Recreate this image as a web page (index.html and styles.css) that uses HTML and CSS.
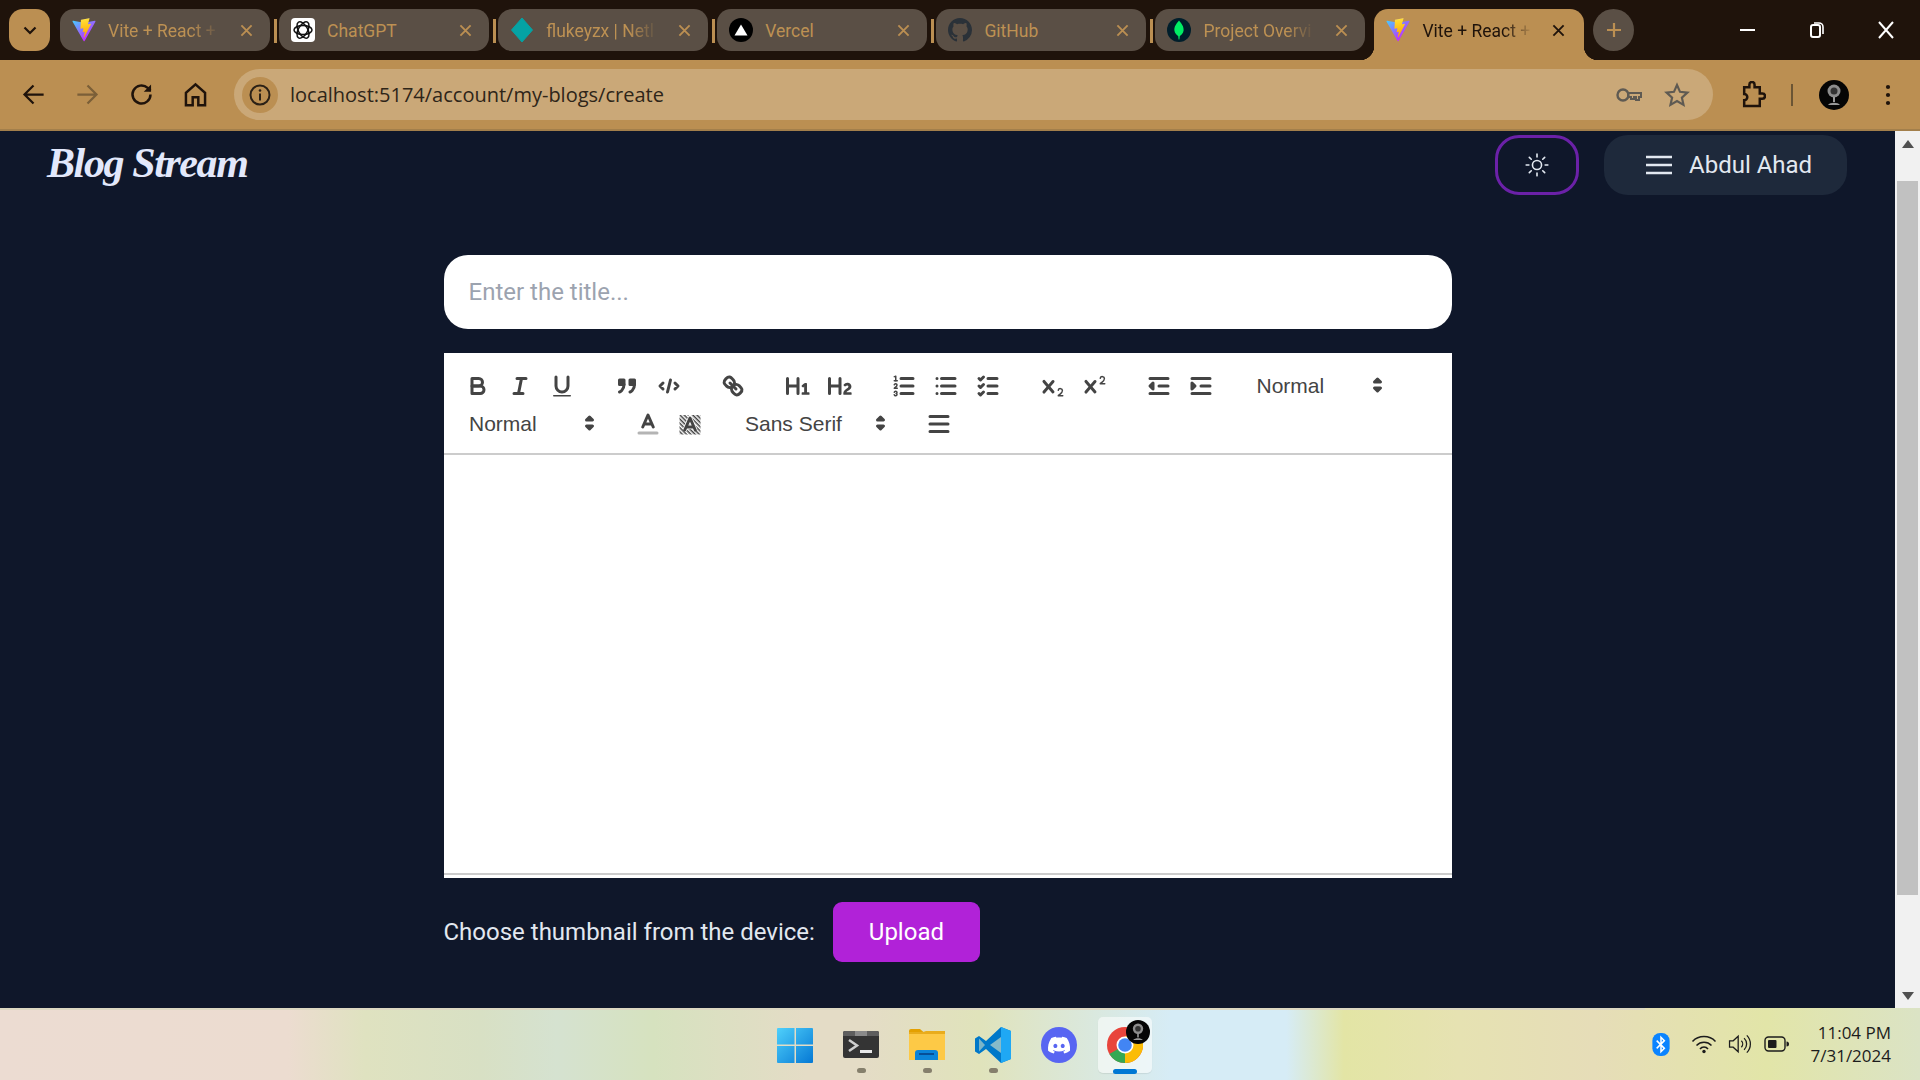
FILE: index.html
```html
<!DOCTYPE html>
<html lang="en">
<head>
<meta charset="utf-8">
<title>Vite + React</title>
<link rel="stylesheet" href="styles.css">
</head>
<body>
<svg class="defs" width="0" height="0" aria-hidden="true">
  <defs>
    <linearGradient id="vb" x1="6" y1="33" x2="235" y2="344" gradientUnits="userSpaceOnUse"><stop offset="0" stop-color="#41D1FF"/><stop offset="1" stop-color="#BD34FE"/></linearGradient>
    <linearGradient id="vy" x1="194" y1="8" x2="236" y2="292" gradientUnits="userSpaceOnUse"><stop offset="0" stop-color="#FFEA83"/><stop offset=".08" stop-color="#FFDD35"/><stop offset="1" stop-color="#FFA800"/></linearGradient>
    <symbol id="vite" viewBox="0 0 410 404">
      <path fill="url(#vb)" d="M399.641 59.5246L215.643 388.545C211.844 395.338 202.084 395.378 198.228 388.618L10.5817 59.5563C6.38087 52.1896 12.6802 43.2665 21.0281 44.7586L205.223 77.6824C206.398 77.8924 207.601 77.8904 208.776 77.6763L389.119 44.8058C397.439 43.2894 403.768 52.1434 399.641 59.5246Z"/>
      <path fill="url(#vy)" d="M292.965 1.5744L156.801 28.2552C154.563 28.6937 152.906 30.5903 152.771 32.8664L144.395 174.33C144.198 177.662 147.258 180.248 150.51 179.498L188.42 170.749C191.967 169.931 195.172 173.055 194.443 176.622L183.18 231.775C182.422 235.487 185.907 238.661 189.532 237.56L212.947 230.446C216.577 229.344 220.065 232.527 219.297 236.242L201.398 322.875C200.278 328.294 207.486 331.249 210.492 326.603L212.5 323.5L323.454 102.072C325.312 98.3645 322.108 94.137 318.036 94.9228L279.014 102.454C275.347 103.161 272.227 99.746 273.262 96.1583L298.731 7.86689C299.767 4.27314 296.636 0.855181 292.965 1.5744Z"/>
    </symbol>
    <symbol id="x" viewBox="0 0 14 14"><path d="M1.500 1.500l11 11M12.500 1.500l-11 11" fill="none" stroke="currentColor" stroke-width="2"/></symbol>
    <symbol id="av" viewBox="0 0 30 30">
      <circle cx="15" cy="15" r="15" fill="#050505"/>
      <circle cx="15" cy="11" r="6.500" fill="#8d8d8d"/><circle cx="15" cy="11" r="3.500" fill="#333"/>
      <path d="M14 17h2v5h-2zM9 25c2-3 10-3 12 0z" fill="#999"/>
    </symbol>
    <pattern id="hatch" width="2" height="2" patternUnits="userSpaceOnUse" patternTransform="rotate(45)"><rect width="2" height="1" fill="#444"/></pattern>
  </defs>
</svg>
<div class="window">
  <div class="tabbar">
    <button class="tab-search"><svg width="14" height="9" viewBox="0 0 14 9"><path d="M1.500 1.500L7 7l5.500-5.500" fill="none" stroke="#1f130b" stroke-width="2.200"/></svg></button>
    <div class="tab">
      <svg class="fav" viewBox="0 0 26 26"><use href="#vite"/></svg>
      <span class="tab-title">Vite + React +</span>
      <svg class="tab-x"><use href="#x"/></svg>
    </div>
    <i class="tab-sep"></i>
    <div class="tab">
      <svg class="fav" viewBox="0 0 24 24"><rect width="24" height="24" rx="4" fill="#fff"/><g fill="none" stroke="#111" stroke-width="1.500"><ellipse cx="12" cy="12" rx="9" ry="4.600"/><ellipse cx="12" cy="12" rx="9" ry="4.600" transform="rotate(60 12 12)"/><ellipse cx="12" cy="12" rx="9" ry="4.600" transform="rotate(120 12 12)"/></g></svg>
      <span class="tab-title plain">ChatGPT</span>
      <svg class="tab-x"><use href="#x"/></svg>
    </div>
    <i class="tab-sep"></i>
    <div class="tab">
      <svg class="fav" viewBox="0 0 24 24"><path d="M12 0l10.500 12L12 24 1.500 12z" fill="#05a3a4" stroke="#05a3a4" stroke-linejoin="round" stroke-width="1"/></svg>
      <span class="tab-title">flukeyzx | Netl</span>
      <svg class="tab-x"><use href="#x"/></svg>
    </div>
    <i class="tab-sep"></i>
    <div class="tab">
      <svg class="fav" viewBox="0 0 24 24"><circle cx="12" cy="12" r="12"/><path d="M12 6.500l6.500 11h-13z" fill="#fff"/></svg>
      <span class="tab-title plain">Vercel</span>
      <svg class="tab-x"><use href="#x"/></svg>
    </div>
    <i class="tab-sep"></i>
    <div class="tab">
      <svg class="fav" viewBox="0 0 16 16"><path fill="#2a3138" d="M8 0C3.58 0 0 3.58 0 8c0 3.54 2.29 6.53 5.47 7.59.4.07.55-.17.55-.38 0-.19-.01-.82-.01-1.49-2.01.37-2.53-.49-2.69-.94-.09-.23-.48-.94-.82-1.13-.28-.15-.68-.52-.01-.53.63-.01 1.08.58 1.23.82.72 1.21 1.87.87 2.33.66.07-.52.28-.87.51-1.07-1.78-.2-3.64-.89-3.64-3.95 0-.87.31-1.59.82-2.15-.08-.2-.36-1.02.08-2.12 0 0 .67-.21 2.2.82.64-.18 1.32-.27 2-.27.68 0 1.36.09 2 .27 1.53-1.04 2.2-.82 2.2-.82.44 1.1.16 1.92.08 2.12.51.56.82 1.27.82 2.15 0 3.07-1.87 3.75-3.65 3.95.29.25.54.73.54 1.48 0 1.07-.01 1.93-.01 2.2 0 .21.15.46.55.38A8.013 8.013 0 0016 8c0-4.42-3.58-8-8-8z"/></svg>
      <span class="tab-title plain">GitHub</span>
      <svg class="tab-x"><use href="#x"/></svg>
    </div>
    <i class="tab-sep"></i>
    <div class="tab">
      <svg class="fav" viewBox="0 0 24 24"><circle cx="12" cy="12" r="12" fill="#001e2b"/><path d="M12 2.500c2.500 3 5 6 4.600 10-.3 3-2.600 4.600-3.800 5.500L12.400 21.500h-.8l-.4-3.500C10 17 7.700 15.500 7.400 12.500 7 8.500 9.500 5.500 12 2.500z" fill="#00ed64"/></svg>
      <span class="tab-title">Project Overvi</span>
      <svg class="tab-x"><use href="#x"/></svg>
    </div>
    <div class="tab tab-active">
      <svg class="fav" viewBox="0 0 26 26"><use href="#vite"/></svg>
      <span class="tab-title">Vite + React +</span>
      <svg class="tab-x"><use href="#x"/></svg>
    </div>
    <button class="tab-new"><svg width="18" height="18" viewBox="0 0 18 18"><path d="M9 2v14M2 9h14" stroke="#bb8f52" stroke-width="2.200"/></svg></button>
    <div class="win-controls">
      <svg width="16" height="16" viewBox="0 0 16 16"><path d="M0 8h15" stroke="#fff" stroke-width="2"/></svg>
      <svg width="16" height="18" viewBox="0 0 16 18"><rect x="2" y="4" width="9" height="12" rx="2" fill="none" stroke="#fff" stroke-width="2"/><path d="M5 2h5a4 4 0 0 1 4 4v7" fill="none" stroke="#fff" stroke-width="1.600"/></svg>
      <svg width="16" height="18" viewBox="0 0 16 18"><path d="M1 1l14 16M15 1L1 17" stroke="#fff" stroke-width="2"/></svg>
    </div>
  </div>

  <div class="toolbar">
    <div class="nav-icons">
      <svg class="nav-i" viewBox="0 0 24 24"><path d="M21 12H4M12 4l-8 8 8 8" fill="none" stroke="#1f130b" stroke-width="2"/></svg>
      <svg class="nav-i" viewBox="0 0 24 24"><path d="M3 12h17M12 4l8 8-8 8" fill="none" stroke="#7b5f38" stroke-width="2"/></svg>
      <svg class="nav-i" viewBox="0 0 24 24"><path d="M20 12a8 8 0 1 1-2.500-5.800L20 8.500" fill="none" stroke="#1f130b" stroke-width="2.200"/><path d="M20.500 3v6.500H14z" fill="#1f130b"/></svg>
      <svg class="nav-i" viewBox="0 0 24 24"><path d="M3.500 21.500V10.500L12 3l8.500 7.500v11H14.500v-7h-5v7z" fill="none" stroke="#1f130b" stroke-width="2.200"/></svg>
    </div>
    <div class="omnibox">
      <span class="chip"><svg width="24" height="24" viewBox="0 0 24 24"><circle cx="12" cy="12" r="9.500" fill="none" stroke="#2b2116" stroke-width="2"/><path d="M12 10.500v7" stroke="#2b2116" stroke-width="2"/><circle cx="12" cy="7.500" r="1.300" fill="#2b2116"/></svg></span>
      <span class="url">localhost:5174/account/my-blogs/create</span>
      <svg class="omni-i" viewBox="0 0 28 24"><circle cx="8" cy="12" r="5.500" fill="none" stroke="#5f5a52" stroke-width="2.400"/><path d="M13 10h13v4h-2v3h-3v-3h-2v2h-3v-2h-3z" fill="none" stroke="#5f5a52" stroke-width="2"/></svg>
      <svg class="omni-i star" viewBox="0 0 24 24"><path d="M12 2.800l2.800 6.300 6.800.7-5.100 4.600 1.500 6.700L12 17.500l-6 3.600 1.500-6.700-5.100-4.600 6.800-.7z" fill="none" stroke="#5f5a52" stroke-width="2"/></svg>
    </div>
    <svg class="ext" viewBox="0 0 26 26"><path d="M5 6h5V3.500a2.500 2.500 0 0 1 5 0V6h5v6h2.500a2.500 2.500 0 0 1 0 5H20v7H5v-5.500a3 3 0 0 0 0-6z" fill="none" stroke="#1f130b" stroke-width="2.400"/></svg>
    <i class="tool-sep"></i>
    <svg class="avatar"><use href="#av"/></svg>
    <svg class="dots" viewBox="0 0 6 24"><circle cx="3" cy="4" r="2.100"/><circle cx="3" cy="12" r="2.100"/><circle cx="3" cy="20" r="2.100"/></svg>
  </div>

  <div class="viewport">
    <main class="page">
      <header class="app-header">
        <a class="logo">Blog Stream</a>
        <div class="header-actions">
          <button class="theme-btn"><svg width="26" height="26" viewBox="0 0 24 24" fill="none" stroke="#e2e8f0" stroke-width="1.500" stroke-linecap="round"><circle cx="12" cy="12" r="4.200"/><path d="M12 2v2.500M12 19.500V22M2 12h2.500M19.500 12H22M4.900 4.900l1.800 1.800M17.300 17.300l1.800 1.800M4.900 19.100l1.800-1.800M17.300 6.700l1.800-1.800"/></svg></button>
          <button class="user-btn"><svg width="30" height="24" viewBox="0 0 30 24"><path d="M2 4h26M2 12h26M2 20h26" stroke="#e2e8f0" stroke-width="2.400"/></svg><span>Abdul Ahad</span></button>
        </div>
      </header>
      <section class="form">
        <input class="title-input" type="text" placeholder="Enter the title...">
        <div class="editor">
          <div class="ql-toolbar">
            <div class="ql-row">
              <span class="ql-group">
                <svg class="ql" viewBox="0 0 18 18"><path class="s" d="M5,4H9.5A2.5,2.5,0,0,1,12,6.5v0A2.5,2.5,0,0,1,9.5,9H5A0,0,0,0,1,5,9V4A0,0,0,0,1,5,4Z"/><path class="s" d="M5,9h5.5A2.5,2.5,0,0,1,13,11.5v0A2.5,2.5,0,0,1,10.5,14H5a0,0,0,0,1,0,0V9A0,0,0,0,1,5,9Z"/></svg>
                <svg class="ql" viewBox="0 0 18 18"><path class="s" d="M7 4h6M5 14h6M8 14l2-10"/></svg>
                <svg class="ql" viewBox="0 0 18 18"><path class="s" d="M5,3V9a4.012,4.012,0,0,0,4,4H9a4.012,4.012,0,0,0,4-4V3"/><rect class="f" height="1" rx=".5" ry=".5" width="12" x="3" y="15"/></svg>
              </span>
              <span class="ql-group">
                <svg class="ql" viewBox="0 0 18 18"><rect class="s f" height="3" width="3" x="4" y="5"/><rect class="s f" height="3" width="3" x="11" y="5"/><path class="s" d="M7,8c0,4.031-3,5-3,5"/><path class="s" d="M14,8c0,4.031-3,5-3,5"/></svg>
                <svg class="ql" viewBox="0 0 18 18"><path class="s" d="M5 7L3 9l2 2M13 7l2 2-2 2M10 5L8 13"/></svg>
              </span>
              <span class="ql-group">
                <svg class="ql" viewBox="0 0 18 18"><path class="s" d="M7 7l4 4"/><path class="s" d="M8.9,4.577a3.476,3.476,0,0,1,.36,4.679A3.476,3.476,0,0,1,4.577,8.9C3.185,7.5,2.035,6.4,4.217,4.217S7.5,3.185,8.9,4.577Z"/><path class="s" d="M13.423,9.1a3.476,3.476,0,0,0-4.679-.36,3.476,3.476,0,0,0,.36,4.679c1.392,1.392,2.5,2.542,4.679.36S14.815,10.5,13.423,9.1Z"/></svg>
              </span>
              <span class="ql-group">
                <svg class="ql" viewBox="0 0 18 18"><path class="f" d="M10,4V14a1,1,0,0,1-2,0V10H3v4a1,1,0,0,1-2,0V4A1,1,0,0,1,3,4V8H8V4a1,1,0,0,1,2,0Zm6.06787,9.209H14.98975V7.59863a.54085.54085,0,0,0-.605-.60547h-.62744a1.01119,1.01119,0,0,0-.748.29688L11.645,8.56641a.5435.5435,0,0,0-.022.8584l.28613.30762a.53861.53861,0,0,0,.84717.0332l.09912-.08789a1.2137,1.2137,0,0,0,.2417-.35254h.02246s-.01123.30859-.01123.60547V13.209H12.041a.54085.54085,0,0,0-.605.60547v.43945a.54085.54085,0,0,0,.605.60547h4.02686a.54085.54085,0,0,0,.605-.60547v-.43945A.54085.54085,0,0,0,16.06787,13.209Z"/></svg>
                <svg class="ql" viewBox="0 0 18 18"><path class="f" d="M16.73975,13.81445v.43945a.54085.54085,0,0,1-.605.60547H11.855a.58392.58392,0,0,1-.64893-.60547V14.0127c0-2.90527,3.39941-3.42187,3.39941-4.55469a.77675.77675,0,0,0-.84717-.78125,1.17684,1.17684,0,0,0-.83594.38477c-.2749.26367-.561.374-.85791.13184l-.4292-.34082c-.30811-.24219-.38525-.51758-.1543-.81445a2.97155,2.97155,0,0,1,2.45361-1.17676,2.45393,2.45393,0,0,1,2.68408,2.40918c0,2.45312-3.1792,2.92676-3.27832,3.93848h2.79443A.54085.54085,0,0,1,16.73975,13.81445ZM9,3A.99974.99974,0,0,0,8,4V8H3V4A1,1,0,0,0,1,4V14a1,1,0,0,0,2,0V10H8v4a1,1,0,0,0,2,0V4A.99974.99974,0,0,0,9,3Z"/></svg>
              </span>
              <span class="ql-group">
                <svg class="ql" viewBox="0 0 18 18"><path class="s" d="M7 4h8M7 9h8M7 14h8"/><path class="t" d="M2.500 5.500h2"/><path class="f" d="M3.500,6A0.5,0.5,0,0,1,3,5.500V3.085l-0.276.138A0.5,0.5,0,0,1,2.053,3c-0.124-.247-0.023-0.324.224-0.447l1-.5A0.5,0.5,0,0,1,4,2.500v3A0.5,0.5,0,0,1,3.500,6Z"/><path class="t" d="M4.500,10.500h-2c0-.234,1.850-1.076,1.850-2.234A0.959,0.959,0,0,0,2.500,8.156"/><path class="t" d="M2.500,14.846a0.959,0.959,0,0,0,1.850-.109A0.700,0.700,0,0,0,3.750,14a0.688,0.688,0,0,0,.6-0.736,0.959,0.959,0,0,0-1.850-.109"/></svg>
                <svg class="ql" viewBox="0 0 18 18"><path class="s" d="M6 4h9M6 9h9M6 14h9M3 4h0M3 9h0M3 14h0"/></svg>
                <svg class="ql" viewBox="0 0 18 18"><path class="s" d="M9 4h6M9 9h6M9 14h6M3 4l1 1 2-2M3 9l1 1 2-2M3 14l1 1 2-2"/></svg>
              </span>
              <span class="ql-group">
                <svg class="ql" viewBox="0 0 18 18"><path class="f" d="M15.500,15H13.861a3.858,3.858,0,0,0,1.914-2.975,1.800,1.800,0,0,0-1.600-1.751A1.921,1.921,0,0,0,12.021,11.700a0.50013,0.50013,0,1,0,.957.291h0a0.914,0.914,0,0,1,1.053-.725,0.810,0.810,0,0,1,.744.762c0,1.076-1.16971,1.86982-1.93971,2.43082A1.45639,1.45639,0,0,0,12,15.500a0.500,0.500,0,0,0,.5.500h3A0.500,0.500,0,0,0,15.500,15Z"/><path class="f" d="M9.651,5.241a1,1,0,0,0-1.410.108L6,7.964,3.759,5.349a1,1,0,1,0-1.519,1.300L4.683,9.500,2.241,12.350a1,1,0,1,0,1.519,1.300L6,11.036l2.241,2.616a1,1,0,0,0,1.519-1.300L7.317,9.500,9.759,6.651A1,1,0,0,0,9.651,5.241Z"/></svg>
                <svg class="ql" viewBox="0 0 18 18"><path class="f" d="M15.500,7H13.861a4.015,4.015,0,0,0,1.914-2.975,1.800,1.800,0,0,0-1.600-1.751A1.922,1.922,0,0,0,12.021,3.700a0.500,0.500,0,1,0,.957.291,0.917,0.917,0,0,1,1.053-.725,0.810,0.810,0,0,1,.744.762c0,1.077-1.164,1.925-1.934,2.486A1.423,1.423,0,0,0,12,7.500a0.500,0.500,0,0,0,.5.500h3A0.500,0.500,0,0,0,15.500,7Z"/><path class="f" d="M9.651,5.241a1,1,0,0,0-1.410.108L6,7.964,3.759,5.349a1,1,0,1,0-1.519,1.300L4.683,9.500,2.241,12.350a1,1,0,1,0,1.519,1.300L6,11.036l2.241,2.616a1,1,0,0,0,1.519-1.300L7.317,9.500,9.759,6.651A1,1,0,0,0,9.651,5.241Z"/></svg>
              </span>
              <span class="ql-group">
                <svg class="ql" viewBox="0 0 18 18"><path class="s" d="M3 14h12M3 4h12M9 9h6"/><polygon class="s" points="5 7 5 11 3 9 5 7"/></svg>
                <svg class="ql" viewBox="0 0 18 18"><path class="s" d="M3 14h12M3 4h12M9 9h6"/><polygon class="s f" points="3 7 3 11 5 9 3 7"/></svg>
              </span>
              <span class="ql-picker w-size">Normal<svg class="caret" viewBox="0 0 18 18"><polygon class="s f" points="7 10 9 12 11 10 7 10"/><polygon class="s f" points="7 6 9 4 11 6 7 6"/></svg></span>
            </div>
            <div class="ql-row">
              <span class="ql-picker w-size">Normal<svg class="caret" viewBox="0 0 18 18"><polygon class="s f" points="7 10 9 12 11 10 7 10"/><polygon class="s f" points="7 6 9 4 11 6 7 6"/></svg></span>
              <span class="ql-group">
                <svg class="ql" viewBox="0 0 18 18"><path class="s lbl" d="M3 15h12"/><path class="s" d="M5.500 11L9 3l3.500 8M11.630 9H6.380"/></svg>
                <svg class="ql" viewBox="0 0 18 18"><rect x="2" y="3" width="14" height="13" fill="url(#hatch)"/><path d="M5.500 13L9 5l3.500 8M11.630 11H6.380" fill="none" stroke="#fff" stroke-width="3"/><path class="s" d="M5.500 13L9 5l3.500 8M11.630 11H6.380"/></svg>
              </span>
              <span class="ql-picker w-font">Sans Serif<svg class="caret" viewBox="0 0 18 18"><polygon class="s f" points="7 10 9 12 11 10 7 10"/><polygon class="s f" points="7 6 9 4 11 6 7 6"/></svg></span>
              <span class="ql-group">
                <svg class="ql" viewBox="0 0 18 18"><path class="s" d="M3 4h12M3 9h12M3 14h12"/></svg>
              </span>
            </div>
          </div>
          <div class="ql-body"></div>
        </div>
        <div class="upload-row">
          <span class="upload-label">Choose thumbnail from the device:</span>
          <button class="upload-btn">Upload</button>
        </div>
      </section>
    </main>
    <div class="scrollbar">
      <span class="sb-arrow"><svg width="12" height="8" viewBox="0 0 12 8"><path d="M6 0l6 8H0z" fill="#505050"/></svg></span>
      <span class="sb-thumb"></span>
      <span class="sb-rest"></span>
      <span class="sb-arrow"><svg width="12" height="8" viewBox="0 0 12 8"><path d="M0 0h12L6 8z" fill="#505050"/></svg></span>
    </div>
  </div>

  <footer class="taskbar">
    <div class="tb-spacer"></div>
    <div class="tb-apps">
      <div class="tb-app">
        <svg class="tb-i" viewBox="0 0 36 36"><defs><linearGradient id="w" x1="0" y1="0" x2="1" y2="1"><stop offset="0" stop-color="#4fd0fb"/><stop offset="1" stop-color="#0578d4"/></linearGradient></defs><path fill="url(#w)" d="M1 1h16.500v16.500H0V2a1 1 0 0 1 1-1zM19 1h16a1 1 0 0 1 1 1v15.500H19zM0 19h17.500v17H1a1 1 0 0 1-1-1zM19 19h17v16a1 1 0 0 1-1 1H19z"/></svg>
      </div>
      <div class="tb-app running">
        <svg class="tb-i" viewBox="0 0 36 36"><rect x="0" y="4" width="36" height="27" rx="2" fill="#343434"/><path d="M0 6a2 2 0 0 1 2-2h10v5H0z" fill="#5e5e5e"/><rect x="12" y="4" width="12" height="5" fill="#8a8a8a"/><path d="M24 4h10a2 2 0 0 1 2 2v3H24z" fill="#5e5e5e"/><path d="M6 13l8 5.500-8 5.500" fill="none" stroke="#cfcfcf" stroke-width="2.500"/><rect x="17" y="23" width="12" height="3" fill="#e8e8e8"/></svg>
      </div>
      <div class="tb-app running">
        <svg class="tb-i" viewBox="0 0 36 36"><path d="M0 4a2 2 0 0 1 2-2h9l4 3.500h-15z" fill="#e4a000"/><path d="M0 5h36v28H0z" fill="#fdc946"/><path d="M0 5h14l3-1h19v3H0z" fill="#e9ac1c"/><path d="M6 33v-7a3 3 0 0 1 3-3h17a3 3 0 0 1 3 3v7z" fill="#0b84d8"/><rect x="10" y="26" width="15" height="2" fill="#064f97"/></svg>
      </div>
      <div class="tb-app running">
        <svg class="tb-i" viewBox="0 0 36 36"><path d="M26 0L11 14 4 9 0 11.500v13L4 27l7-5L26 36l10-4V4z" fill="#0078c9"/><path d="M26 0l10 4v28l-10 4z" fill="#1fa8f4"/><path d="M26 10L15 18l11 8z" fill="#f4f0c8" opacity=".55"/><path d="M4 11.500v13l6-6.500z" fill="#f4f0c8" opacity=".5"/></svg>
      </div>
      <div class="tb-app">
        <svg class="tb-i" viewBox="0 0 36 36"><circle cx="18" cy="18" r="18" fill="#5865f2"/><g transform="translate(7 7) scale(.92)"><path fill="#fff" d="M20.317 4.3698a19.7913 19.7913 0 00-4.8851-1.5152.0741.0741 0 00-.0785.0371c-.211.3753-.4447.8648-.6083 1.2495-1.8447-.2762-3.68-.2762-5.4868 0-.1636-.3933-.4058-.8742-.6177-1.2495a.077.077 0 00-.0785-.037 19.7363 19.7363 0 00-4.8852 1.515.0699.0699 0 00-.0321.0277C.5334 9.0458-.319 13.5799.0992 18.0578a.0824.0824 0 00.0312.0561c2.0528 1.5076 4.0413 2.4228 5.9929 3.0294a.0777.0777 0 00.0842-.0276c.4616-.6304.8731-1.2952 1.226-1.9942a.076.076 0 00-.0416-.1057c-.6528-.2476-1.2743-.5495-1.8722-.8923a.077.077 0 01-.0076-.1277c.1258-.0943.2517-.1923.3718-.2914a.0743.0743 0 01.0776-.0105c3.9278 1.7933 8.18 1.7933 12.0614 0a.0739.0739 0 01.0785.0095c.1202.099.246.1981.3728.2924a.077.077 0 01-.0066.1276 12.2986 12.2986 0 01-1.873.8914.0766.0766 0 00-.0407.1067c.3604.698.7719 1.3628 1.225 1.9932a.076.076 0 00.0842.0286c1.961-.6067 3.9495-1.5219 6.0023-3.0294a.077.077 0 00.0313-.0552c.5004-5.177-.8382-9.6739-3.5485-13.6604a.061.061 0 00-.0312-.0286zM8.02 15.3312c-1.1825 0-2.1569-1.0857-2.1569-2.419 0-1.3332.9555-2.4189 2.157-2.4189 1.2108 0 2.1757 1.0952 2.1568 2.419 0 1.3332-.9555 2.4189-2.1569 2.4189zm7.9748 0c-1.1825 0-2.1569-1.0857-2.1569-2.419 0-1.3332.9554-2.4189 2.1569-2.4189 1.2108 0 2.1757 1.0952 2.1568 2.419 0 1.3332-.946 2.4189-2.1568 2.4189Z"/></g></svg>
      </div>
      <div class="tb-app active">
        <svg class="tb-i" viewBox="0 0 36 36"><circle cx="18" cy="18" r="18" fill="#e8453c"/><path d="M18 18L2.400 27A18 18 0 0 0 18 36c1 0 2-.1 3-.3z" fill="#34a853"/><path d="M18 9h15.600A18 18 0 0 1 18 36z" fill="#fbbc05"/><circle cx="18" cy="18" r="8.500" fill="#fff"/><circle cx="18" cy="18" r="6.800" fill="#4285f4"/></svg>
        <svg class="tb-badge"><use href="#av"/></svg>
      </div>
    </div>
    <div class="tb-tray">
      <svg class="bt" viewBox="0 0 18 24"><rect width="18" height="24" rx="8" fill="#0a84ff"/><path d="M4.500 8l8 8-3.500 3.500v-15L12.500 8l-8 8" fill="none" stroke="#fff" stroke-width="1.600"/></svg>
      <svg class="tray-i" viewBox="0 0 26 20"><path d="M1.500 7.500a16 16 0 0 1 23 0M5.500 11.500a10.500 10.500 0 0 1 15 0M9 15a5 5 0 0 1 8 0" fill="none" stroke="#1c1c1c" stroke-width="1.500"/><circle cx="13" cy="17.500" r="1.700" fill="#1c1c1c"/></svg>
      <svg class="tray-i" viewBox="0 0 26 22"><path d="M1.500 7.500h4L11 2.500v17l-5.500-5h-4z" fill="none" stroke="#1c1c1c" stroke-width="1.400"/><path d="M14.500 7.500a5 5 0 0 1 0 7M17.500 4.500a9 9 0 0 1 0 13M20.500 1.500a13.500 13.500 0 0 1 0 19" fill="none" stroke="#1c1c1c" stroke-width="1.400"/></svg>
      <svg class="tray-i" viewBox="0 0 26 20"><rect x="1" y="3" width="20" height="14" rx="3.500" fill="none" stroke="#1c1c1c" stroke-width="1.400"/><rect x="4" y="6" width="8.500" height="8" rx="1" fill="#1c1c1c"/><path d="M22.500 7.500a2.500 2.500 0 0 1 0 5z" fill="#1c1c1c"/></svg>
      <div class="clock"><span>11:04 PM</span><span>7/31/2024</span></div>
    </div>
  </footer>
</div>
</body>
</html>
```

FILE: styles.css
```css
* { box-sizing: border-box; }
html, body { margin: 0; padding: 0; height: 100%; overflow: hidden; }
button { border: 0; padding: 0; font: inherit; }
.defs { display: block; height: 0; position: absolute; }
.window { display: flex; flex-direction: column; width: 1920px; height: 1080px; }

/* Tab strip */
.tabbar { display: flex; align-items: flex-start; height: 60px; padding: 9px 0 0 9px; background: #1f130b; color: #bb8f52; flex: none; }
.tab-search { display: flex; align-items: center; justify-content: center; width: 41px; height: 42px; margin-right: 10px; background: #bb8f52; border-radius: 14px; }
.tab { position: relative; display: flex; align-items: center; flex: none; width: 210px; height: 42px; padding: 0 12px; background: #5a4f45; border-radius: 14px; }
.tab-sep { flex: none; width: 3px; height: 24px; margin: 10px 2.100px 0 4px; background: #bb8f52; }
.fav { flex: none; width: 24px; height: 24px; margin-right: 12px; }
.tab-title { flex: 1; min-width: 0; padding-top: 1px; overflow: hidden; white-space: nowrap; font: 17.500px "Roboto", sans-serif; color: #bd9153; -webkit-mask-image: linear-gradient(90deg, #000 68%, transparent 92%); mask-image: linear-gradient(90deg, #000 68%, transparent 92%); }
.tab-title.plain { -webkit-mask-image: none; mask-image: none; }
.tab-x { flex: none; width: 13px; height: 13px; margin-left: 10px; margin-right: 5px; color: #bb8f52; }
.tab-active { margin-left: 9px; height: 51px; background: #bb8f52; border-radius: 14px 14px 0 0; padding-bottom: 9px; }
.tab-active::before, .tab-active::after { content: ""; position: absolute; bottom: 0; width: 14px; height: 14px; }
.tab-active::before { left: -14px; background: radial-gradient(circle at 0 0, transparent 14px, #bb8f52 14.500px); }
.tab-active::after { right: -14px; background: radial-gradient(circle at 100% 0, transparent 14px, #bb8f52 14.500px); }
.tab-active .tab-title { color: #1f130b; }
.tab-active .tab-x { color: #1f130b; margin-right: 7px; }
.tab-new { display: flex; align-items: center; justify-content: center; flex: none; width: 41px; height: 42px; margin-left: 9px; background: #5a4f45; border-radius: 50%; position: relative; z-index: 1; }
.win-controls { display: flex; align-items: center; justify-content: space-between; height: 42px; margin-left: auto; width: 154px; margin-right: 26px; }

/* Browser toolbar */
.toolbar { display: flex; align-items: center; flex: none; height: 71px; background: #bb8f52; border-bottom: 2px solid #a37f4b; }
.nav-icons { display: flex; align-items: center; gap: 27px; width: 234px; padding-left: 20px; flex: none; }
.nav-i { width: 27px; height: 27px; flex: none; }
.omnibox { display: flex; align-items: center; flex: none; width: 1479px; height: 51px; padding: 0 23px 0 8px; background: #caa878; border-radius: 26px; }
.chip { display: flex; align-items: center; justify-content: center; width: 36px; height: 36px; margin-right: 12px; background: #bb8f52; border-radius: 50%; flex: none; }
.url { flex: 1; font: 20px "Open Sans", sans-serif; color: #2e2518; white-space: nowrap; }
.omni-i { flex: none; width: 28px; height: 24px; margin-right: 21px; }
.omni-i.star { width: 26px; height: 26px; margin-right: 0; }
.ext { width: 27px; height: 27px; margin-left: 26px; flex: none; }
.tool-sep { width: 2px; height: 22px; margin-left: 25px; background: #6b5534; flex: none; }
.avatar { width: 30px; height: 30px; margin-left: 26px; flex: none; }
.dots { width: 6px; height: 24px; margin-left: 36px; fill: #1f130b; flex: none; }

/* Page */
.viewport { display: flex; flex: 1; min-height: 0; background: #0f172a; }
.page { flex: 1; min-width: 0; padding-top: 4px; }
.app-header { display: flex; align-items: center; justify-content: space-between; height: 60px; padding: 0 48px 0 47px; }
.logo { display: block; font: italic 700 42px/60px "Liberation Serif", serif; letter-spacing: -1.400px; color: #e2e8fb; white-space: nowrap; margin-top: -4px; }
.header-actions { display: flex; align-items: center; gap: 25px; }
.theme-btn { display: flex; align-items: center; justify-content: center; width: 84px; height: 60px; background: transparent; border: 3px solid #6b21a8; border-radius: 24px; }
.user-btn { display: flex; align-items: center; gap: 15px; height: 60px; width: 243px; padding-left: 40px; background: #1e293b; border-radius: 24px; color: #e2e8f0; font: 400 24px "Roboto", sans-serif; }
.form { display: flex; flex-direction: column; width: 1008px; margin: 60px auto 0; }
.title-input { display: block; width: 100%; height: 74px; padding: 0 25px; background: #fff; border: 0; border-radius: 24px; font: 24px "Roboto", sans-serif; outline: 0; }
.title-input::placeholder { color: #9ca3af; opacity: 1; }
.editor { display: flex; flex-direction: column; height: 525px; margin-top: 24px; background: #fff; }
.ql-toolbar { flex: none; height: 102px; padding: 14px 0 0 13.500px; border-bottom: 2px solid #ccc; }
.ql-row { display: flex; align-items: center; height: 38px; }
.ql-group { display: flex; margin-right: 22.500px; }
.ql { display: block; width: 42px; height: 36px; padding: 4.500px 7.500px; }
.s { fill: none; stroke: #444; stroke-width: 2; stroke-linecap: round; stroke-linejoin: round; }
.f { fill: #444; }
.s.f { fill: #444; }
.t { fill: none; stroke: #444; stroke-width: 1; stroke-linecap: round; stroke-linejoin: round; }
.lbl { stroke-opacity: .4; }
.ql-picker { position: relative; display: flex; align-items: center; height: 36px; margin-right: 22.500px; padding-left: 12px; font: 21px "Liberation Sans", sans-serif; color: #444; }
.w-size { width: 147px; }
.w-font { width: 162px; }
.caret { position: absolute; right: 1px; top: 4.500px; width: 27px; height: 27px; }
.ql-body { flex: 1; border-bottom: 2px solid #ccc; margin-bottom: 3px; }
.upload-row { display: flex; align-items: center; gap: 18px; height: 60px; margin-top: 24px; }
.upload-label { font: 24px "Roboto", sans-serif; color: #e2e8f0; }
.upload-btn { width: 147px; height: 60px; background: #b122d8; border-radius: 9px; color: #fff; font: 400 24px "Roboto", sans-serif; }

/* Scrollbar */
.scrollbar { display: flex; flex-direction: column; flex: none; width: 25px; background: #f1f1f1; }
.sb-arrow { display: flex; align-items: center; justify-content: center; flex: none; height: 25px; }
.sb-thumb { flex: none; height: 714px; margin: 25px 2px 0; background: #c1c1c1; }
.sb-rest { flex: 1; }

/* Taskbar */
.taskbar { display: flex; align-items: stretch; flex: none; height: 72px; background: linear-gradient(#dcd8c2, #dcd8c2) 0 0 / 1645px 2px no-repeat, linear-gradient(90deg, #ecdcd2 0, #ecdcd0 15%, #dfe2c0 19%, #d8e0c4 25%, #d5e2d0 29%, #d6e2bf 34%, #e4dcc6 42%, #e4dcc6 45%, #e0e3bb 51%, #d6ecf6 61%, #d6ecf6 67%, #e3e5a5 70%, #e6e2b2 76%, #e6ddb8 83%, #e2e5a8 92%, #dbe3c5 100%); }
.tb-spacer { width: 768px; flex: none; }
.tb-apps { display: flex; align-items: center; gap: 12px; padding-top: 1px; }
.tb-app { position: relative; display: flex; align-items: center; justify-content: center; width: 54px; height: 56px; border-radius: 5px; }
.tb-i { width: 36px; height: 36px; display: block; }
.running::after, .active::after { content: ""; position: absolute; bottom: 0; left: 50%; margin-left: -4.500px; width: 9px; height: 5px; background: #857f6c; border-radius: 3px; }
.active { background: rgba(255,255,255,.55); box-shadow: 0 1px 1px rgba(0,0,0,.08); }
.active::after { bottom: -1px; margin-left: -12px; width: 24px; background: #0078d4; }
.tb-badge { position: absolute; top: 3px; right: 2px; width: 24px; height: 24px; }
.tb-tray { display: flex; align-items: center; margin-left: auto; padding-right: 29px; }
.bt { width: 18px; height: 23px; margin-right: 21px; }
.tray-i { width: 26px; height: 20px; margin-right: 10.500px; }
.clock { display: flex; flex-direction: column; align-items: flex-end; margin-left: 10px; font: 17px/23px "Open Sans", sans-serif; color: #1c1c1c; }
```
